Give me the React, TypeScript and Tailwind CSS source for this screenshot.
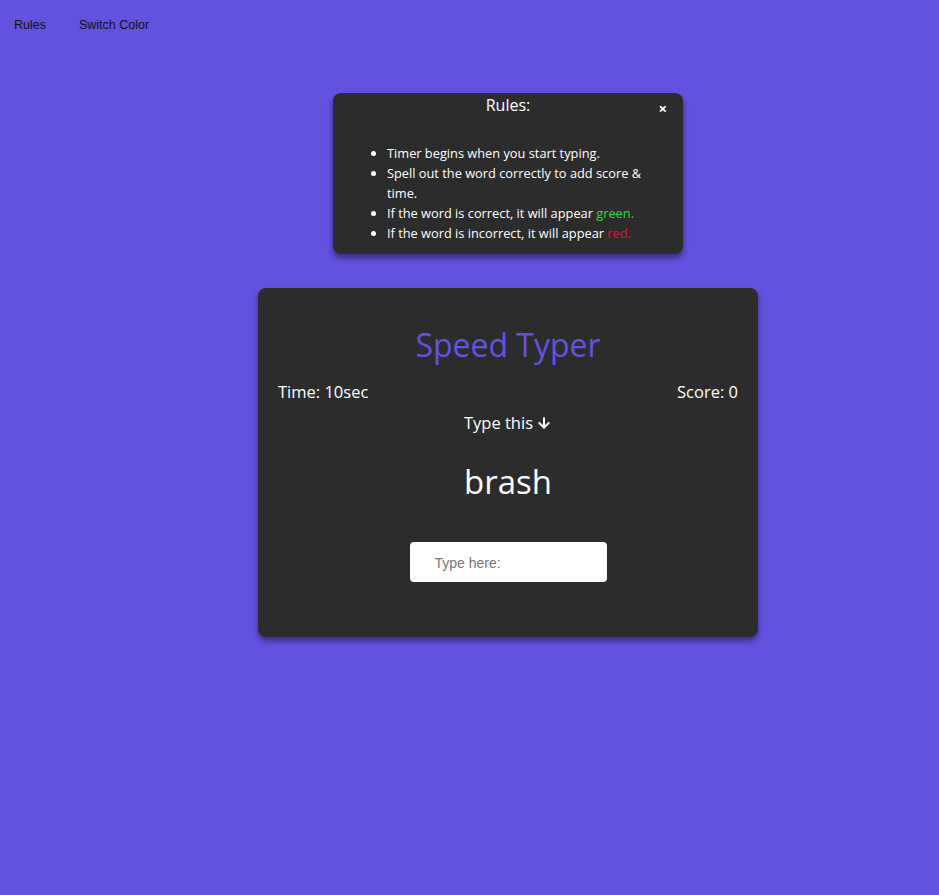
import React, { useState } from 'react';
import { ArrowDown } from 'lucide-react';

const font = { fontFamily: '"Open Sans", "Liberation Sans", sans-serif' };

function RulesBox({ onClose }: { onClose: () => void }) {
  return (
    <div
      className="relative w-[350px] rounded-lg bg-[#2c2c2c] pt-[1px] pb-[11px] text-white shadow-[0_4px_6px_rgba(0,0,0,0.45)]"
      style={font}
    >
      <h2 className="text-center text-[16px] leading-[22px]">Rules:</h2>
      <button
        onClick={onClose}
        className="absolute top-[6px] right-[16px] text-[15px] font-bold leading-[18px] text-white"
      >
        ×
      </button>
      <ul className="mt-[27px] list-disc pr-[28px] pl-[54px] text-[12.8px] leading-[20px]">
        <li>Timer begins when you start typing.</li>
        <li>Spell out the word correctly to add score &amp; time.</li>
        <li>
          If the word is correct, it will appear <span className="text-[#22e03a]">green.</span>
        </li>
        <li>
          If the word is incorrect, it will appear <span className="text-[#e0143c]">red.</span>
        </li>
      </ul>
    </div>
  );
}

function Game() {
  const [text, setText] = useState('');
  return (
    <div
      className="mt-[34px] flex h-[349px] w-[500px] flex-col items-center rounded-lg bg-[#2c2c2c] px-[20px] pt-[36px] text-white shadow-[0_4px_6px_rgba(0,0,0,0.45)]"
      style={font}
    >
      <h1 className="text-[32px] leading-[42px] text-[#6352e0]">Speed Typer</h1>
      <div className="mt-[15px] flex w-full justify-between text-[16.5px] leading-[22px]">
        <span>Time: 10sec</span>
        <span>Score: 0</span>
      </div>
      <p className="mt-[9px] flex items-center gap-[3px] text-[16.5px] leading-[22px]">
        Type this <ArrowDown size={16} strokeWidth={3} />
      </p>
      <p className="mt-[26px] text-[33px] leading-[44px]">brash</p>
      <input
        value={text}
        onChange={(e) => setText(e.target.value)}
        placeholder="Type here:"
        className="mt-[38px] h-[40px] w-[197px] rounded-[4px] bg-white px-[25px] pt-[2px] text-[14px] text-black outline-none placeholder:text-[#757575]"
        style={{ fontFamily: '"Liberation Sans", Arial, sans-serif' }}
      />
    </div>
  );
}

export default function App() {
  const [showRules, setShowRules] = useState(true);
  return (
    <div className="min-h-[895px] bg-[#6352e0] pt-[17px]">
      <nav
        className="flex gap-[33px] pl-[14px] text-[12.5px] leading-[16px] text-[#111]"
        style={{ fontFamily: '"Liberation Sans", Arial, sans-serif' }}
      >
        <button onClick={() => setShowRules(!showRules)}>Rules</button>
        <button>Switch Color</button>
      </nav>
      <main className="flex flex-col items-center pt-[60px] pl-[77px]">
        {showRules && <RulesBox onClose={() => setShowRules(false)} />}
        <Game />
      </main>
    </div>
  );
}
